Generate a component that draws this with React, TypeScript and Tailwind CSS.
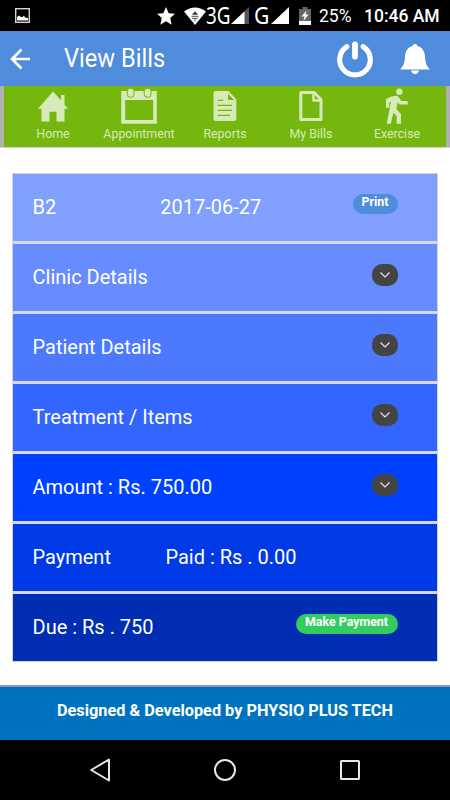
import type { ReactNode } from 'react';

interface NavItem {
  label: string;
  icon: ReactNode;
}

interface BillRow {
  label: string;
  value?: string;
  valueClass?: string;
  bg: string;
  action: 'print' | 'expand' | 'pay' | 'none';
}

const navItems: NavItem[] = [
  {
    label: 'Home',
    icon: (
      <svg className="w-9 h-9 overflow-visible" viewBox="0 0 36 36" fill="currentColor">
        <path d="M18 5.500L3 22.800h3.500V35.500h8V25.800h7v9.700h8V22.800H33L29.500 18.800V9h-3.500v5.200z" />
      </svg>
    ),
  },
  {
    label: 'Appointment',
    icon: (
      <svg className="w-9 h-9 overflow-visible" viewBox="0 0 36 36" fill="currentColor">
        <path fillRule="evenodd" d="M0.200 5h35.600v32.700H0.200zM4.200 14v20h28V14z" />
        <rect x="6.200" y="2.300" width="6.800" height="9" rx="3" stroke="#75b70f" strokeWidth="1" />
        <rect x="23.200" y="2.300" width="6.800" height="9" rx="3" stroke="#75b70f" strokeWidth="1" />
      </svg>
    ),
  },
  {
    label: 'Reports',
    icon: (
      <svg className="w-9 h-9 overflow-visible" viewBox="0 0 36 36" fill="currentColor">
        <path d="M8.500 5H21.500L29.300 13.500V33a2 2 0 0 1-2 2H8.500a2 2 0 0 1-2-2V7a2 2 0 0 1 2-2z" />
        <path d="M21 7.800V14h6z" fill="#75b70f" />
        <path d="M10.700 14.300h5.600M10.700 19.300H25M10.700 24.400H25M10.700 29.400h12.300" stroke="#75b70f" strokeWidth="1.200" />
      </svg>
    ),
  },
  {
    label: 'My Bills',
    icon: (
      <svg className="w-9 h-9 overflow-visible" viewBox="0 0 36 36" fill="none" stroke="currentColor" strokeWidth="3" strokeLinejoin="round">
        <path d="M7.800 6.500h13.400L28 13.500v20H7.800z" />
        <path d="M20.500 7v7.500H28" strokeWidth="2.500" />
      </svg>
    ),
  },
  {
    label: 'Exercise',
    icon: (
      <svg className="w-9 h-9 overflow-visible" viewBox="0 0 36 36" fill="currentColor">
        <circle cx="20.300" cy="5.800" r="3.200" />
        <path d="M12.500 10.500L17 9.800q2 0 3 2l2.300 3.300h6.400v3.400h-8l-2-2.300-1.300 6.800 4.600 5V37.700h-4.300v-7.500l-3.300-3.500-2.600 11H7.700l4.300-22-1.700 1v5H7v-8.700z" />
      </svg>
    ),
  },
];

const rows: BillRow[] = [
  { label: 'B2', value: '2017-06-27', valueClass: 'ml-[104px]', bg: 'bg-[#809fff]', action: 'print' },
  { label: 'Clinic Details', bg: 'bg-[#668cff]', action: 'expand' },
  { label: 'Patient Details', bg: 'bg-[#4d79ff]', action: 'expand' },
  { label: 'Treatment / Items', bg: 'bg-[#3366ff]', action: 'expand' },
  { label: 'Amount : Rs. 750.00', bg: 'bg-[#0040ff]', action: 'expand' },
  { label: 'Payment', value: 'Paid : Rs . 0.00', valueClass: 'ml-[54.500px]', bg: 'bg-[#0039e6]', action: 'none' },
  { label: 'Due : Rs . 750', bg: 'bg-[#002db3]', action: 'pay' },
];

function StatusBar() {
  return (
    <div className="h-[31px] bg-black flex items-center text-white">
      <svg className="ml-[15px] w-[15px] h-[15px]" viewBox="0 0 15 15">
        <rect x="0.700" y="0.700" width="13.600" height="13.600" fill="none" stroke="#d5d5d5" strokeWidth="1.400" />
        <path d="M2 12.500V9l2-1.500 2 1.500h1.500L9 7.500l1 2 3 .5v2.500z" fill="#fff" />
      </svg>
      <svg className="ml-[127px] w-[18px] h-[18px]" viewBox="0 0 18 18" fill="currentColor">
        <path d="M9 0l2.700 6.200 6.300.5-4.800 4.300 1.500 6.700L9 14.200l-5.700 3.500 1.500-6.700L0 6.700l6.300-.5z" />
      </svg>
      <svg className="ml-[9px] w-[22px] h-[18px]" viewBox="0 0 22 18" fill="currentColor">
        <path d="M0 4.500Q11-3.500 22 4.500L11 18z" />
        <path d="M11 4.200L8 7.800h6z" fill="#333" />
        <path d="M7.500 9.300h7M8 11.300h6M11 11v3" fill="none" stroke="#555" strokeWidth="1" />
      </svg>
      <span className="w-[25px] h-[23px] font-['Noto_Sans',sans-serif] text-[23px] leading-[23px]">
        <span className="inline-block origin-left scale-x-[0.82]">3G</span>
      </span>
      <svg className="w-[18px] h-[17px]" viewBox="0 0 18 17">
        <path d="M18 0v17H0z" fill="#555" />
        <path d="M13.500 4.500V17H0z" fill="#fff" />
      </svg>
      <span className="ml-[5px] w-4 h-[23px] font-['Noto_Sans',sans-serif] text-[23px] leading-[23px]">
        <span className="inline-block origin-left scale-x-[0.92]">G</span>
      </span>
      <svg className="ml-px w-[18px] h-[17px]" viewBox="0 0 18 17" fill="currentColor">
        <path d="M18 0v17H0z" />
      </svg>
      <svg className="ml-[10px] w-[12px] h-[18px]" viewBox="0 0 12 18">
        <path d="M3.500 0h5v2H12v16H0V2h3.500z" fill="#666" />
        <path d="M0 14h12v4H0z" fill="#fff" />
        <path d="M7.500 3.500L2.500 9.500h3L4.500 14l5-6.500h-3z" fill="#fff" />
      </svg>
      <span className="ml-2 mt-[3px] w-[45px] text-[17.500px] leading-none">25%</span>
      <span className="mt-[3px] text-[17.500px] leading-none font-medium whitespace-nowrap">10:46 AM</span>
    </div>
  );
}

function Header() {
  return (
    <header className="h-[55px] bg-[#4f8cdb] flex items-center text-white">
      <svg className="ml-[10px] w-5 h-5 overflow-visible" viewBox="0 0 20 20" fill="none" stroke="currentColor" strokeWidth="2.700">
        <path d="M20 10H2M11.500 0.500L2 10l9.500 9.500" />
      </svg>
      <h1 className="ml-[34px] origin-left scale-x-[0.945] text-[25px] leading-none">View Bills</h1>
      <svg className="ml-auto w-9 h-9 overflow-visible" viewBox="0 0 36 36" fill="none" stroke="currentColor" strokeLinecap="round">
        <path d="M9.800 5.700a15.300 15.300 0 1 0 16.400 0" strokeWidth="5.200" />
        <path d="M18 3.300V15.500" strokeWidth="5.800" />
      </svg>
      <svg className="ml-[27px] mr-5 w-[30px] h-[30px]" viewBox="0 0 30 30" fill="currentColor">
        <path d="M15 0c1.500 0 2.200.8 2.300 2C22 3 24.500 7 25 12c.5 8 1.500 10 5 13.500H0C3.500 22 4.500 20 5 12c.5-5 3-9 7.700-10 .1-1.200.8-2 2.300-2z" />
        <path d="M11 26.500h8c-.5 2-2 3.500-4 3.500s-3.500-1.500-4-3.500z" />
      </svg>
    </header>
  );
}

function NavBar() {
  return (
    <nav className="h-[62px] px-1 bg-[#b0b0b0] border-b border-[#d5d5d5]">
      <div className="h-full px-1.5 bg-[#75b70f] flex text-[#d7ebb8]">
        {navItems.map((item) => (
          <div key={item.label} className="flex-1 flex flex-col items-center">
            <div className="h-[38px]">{item.icon}</div>
            <span className="mt-[3px] text-[12.400px] leading-[13px]">{item.label}</span>
          </div>
        ))}
      </div>
    </nav>
  );
}

function RowAction({ action }: { action: BillRow['action'] }) {
  if (action === 'print') {
    return (
      <button className="ml-auto mb-[5px] w-[45px] h-5 pb-[3px] rounded-full bg-[#4f8cdb] flex items-center justify-center text-[12.400px] font-bold">
        Print
      </button>
    );
  }
  if (action === 'pay') {
    return (
      <button className="ml-auto mb-[5px] w-[102px] h-5 pb-[3px] rounded-full bg-[#33cd5f] flex items-center justify-center text-[12.400px] font-bold whitespace-nowrap">
        Make Payment
      </button>
    );
  }
  if (action === 'expand') {
    return (
      <button className="ml-auto mb-[3px] w-[26px] h-[22px] pb-[1px] rounded-[10px] bg-[#444] flex items-center justify-center">
        <svg className="w-[10px] h-[6px]" viewBox="0 0 10 6" fill="none" stroke="#e5e5e5" strokeWidth="1.200">
          <path d="M0.500 0.500L5 5l4.500-4.500" />
        </svg>
      </button>
    );
  }
  return null;
}

export default function App() {
  return (
    <div className="w-[450px] h-[800px] overflow-hidden flex flex-col bg-white font-[Roboto,sans-serif]">
      <StatusBar />
      <Header />
      <NavBar />
      <main className="flex-1 px-3 pt-[25px]">
        <div className="border border-[#d2d3df] bg-[#d9d9e3] flex flex-col gap-[3px]">
          {rows.map((row) => (
            <div key={row.label} className={`h-[67px] pl-[19.500px] pr-[39.500px] pb-[2px] flex items-center text-[20px] text-white ${row.bg}`}>
              <span>{row.label}</span>
              {row.value && <span className={row.valueClass}>{row.value}</span>}
              <RowAction action={row.action} />
            </div>
          ))}
        </div>
      </main>
      <footer className="h-[55px] border-t-2 border-[#7f9ccb] bg-[#0073c0] pt-[15px] text-center text-[16.300px] leading-[18px] font-bold text-white">
        Designed &amp; Developed by PHYSIO PLUS TECH
      </footer>
      <div className="h-[60px] bg-black flex items-center justify-center gap-[104px]">
        <svg className="w-5 h-6" viewBox="0 0 20 24" fill="none" stroke="#e6e6e6" strokeWidth="2" strokeLinejoin="round">
          <path d="M19 1.500v21L1.200 12z" />
        </svg>
        <svg className="w-[22px] h-[22px]" viewBox="0 0 22 22" fill="none" stroke="#e6e6e6" strokeWidth="2">
          <circle cx="11" cy="11" r="10" />
        </svg>
        <svg className="w-5 h-5" viewBox="0 0 20 20" fill="none" stroke="#e6e6e6" strokeWidth="2">
          <rect x="1" y="1" width="18" height="18" rx="0.500" />
        </svg>
      </div>
    </div>
  );
}
